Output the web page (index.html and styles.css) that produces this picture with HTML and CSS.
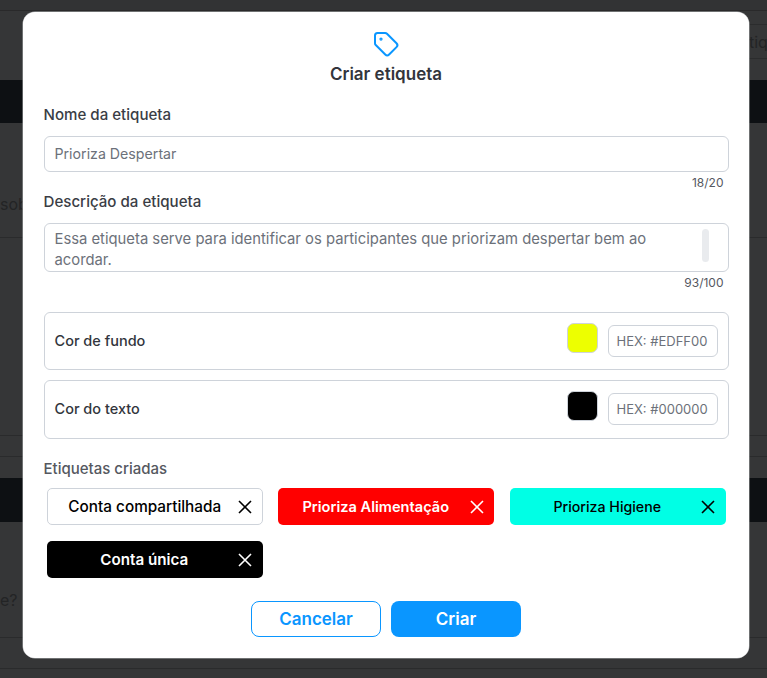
FILE: index.html
```html
<!DOCTYPE html>
<html lang="pt">
<head>
<meta charset="utf-8">
<title>Criar etiqueta</title>
<link rel="stylesheet" href="styles.css">
</head>
<body>
<div class="backdrop">
  <div class="bg-top"></div>
  <div class="bg-toolbar"><span class="bg-text-right">tiq</span></div>
  <div class="bg-band bg-band-one"></div>
  <div class="bg-row bg-row-a"><span class="bg-text-left">sob</span></div>
  <div class="bg-row bg-row-b"></div>
  <div class="bg-row bg-row-c"></div>
  <div class="bg-row bg-row-d"></div>
  <div class="bg-band bg-band-two"></div>
  <div class="bg-row bg-row-e"><span class="bg-text-left">e?</span></div>
  <div class="bg-row bg-row-f"></div>
  <div class="bg-row bg-row-g"></div>
</div>
<section class="modal">
  <header class="modal-head">
    <svg class="tag-icon" viewBox="0 0 24 24" fill="none" stroke="#0a96ff" stroke-width="1.6" stroke-linecap="round" stroke-linejoin="round"><path d="M3.2 5.2v6.1c0 .6.2 1.1.6 1.5l7.6 7.6c.9.9 2.2.9 3.1 0l5.9-5.9c.9-.9.9-2.2 0-3.1l-7.6-7.6c-.4-.4-.9-.6-1.5-.6H5.2c-1.1 0-2 .9-2 2z"/><circle cx="8" cy="8" r=".5"/></svg>
    <h1 class="modal-title">Criar etiqueta</h1>
  </header>

  <label class="field-label">Nome da etiqueta</label>
  <div class="text-box name-box">Prioriza Despertar</div>
  <div class="counter">18/20</div>

  <label class="field-label desc-label">Descrição da etiqueta</label>
  <div class="text-box desc-box">
    <span class="desc-text">Essa etiqueta serve para identificar os participantes que priorizam despertar bem ao acordar.</span>
    <span class="scrollbar"></span>
  </div>
  <div class="counter">93/100</div>

  <div class="color-row color-row-first">
    <span class="color-label">Cor de fundo</span>
    <span class="swatch swatch-yellow"></span>
    <span class="hex-box">HEX: #EDFF00</span>
  </div>
  <div class="color-row">
    <span class="color-label">Cor do texto</span>
    <span class="swatch swatch-black"></span>
    <span class="hex-box">HEX: #000000</span>
  </div>

  <div class="created-label">Etiquetas criadas</div>
  <div class="tag-grid">
    <div class="tag tag-white"><span class="tag-name">Conta compartilhada</span><svg class="close" viewBox="0 0 14 14"><path d="M1 1l12 12M13 1L1 13"/></svg></div>
    <div class="tag tag-red"><span class="tag-name">Prioriza Alimentação</span><svg class="close" viewBox="0 0 14 14"><path d="M1 1l12 12M13 1L1 13"/></svg></div>
    <div class="tag tag-cyan"><span class="tag-name">Prioriza Higiene</span><svg class="close" viewBox="0 0 14 14"><path d="M1 1l12 12M13 1L1 13"/></svg></div>
    <div class="tag tag-black"><span class="tag-name">Conta única</span><svg class="close" viewBox="0 0 14 14"><path d="M1 1l12 12M13 1L1 13"/></svg></div>
  </div>

  <div class="actions">
    <button class="btn btn-outline">Cancelar</button>
    <button class="btn btn-solid">Criar</button>
  </div>
</section>
</body>
</html>
```

FILE: styles.css
```css
* { box-sizing: border-box; }
html, body { margin: 0; height: 678px; overflow: hidden; }
body { background: #353637; font-family: Inter, "Liberation Sans", sans-serif; position: relative; }

.backdrop { display: flex; flex-direction: column; height: 678px; font-size: 16px; }
.bg-top { height: 11px; background: #323334; border-bottom: 1px solid #29292a; }
.bg-toolbar { height: 69px; padding-top: 13px; display: flex; justify-content: flex-end; align-items: flex-start; }
.bg-text-right { width: 18px; height: 35px; line-height: 35px; color: #232425; border-top: 1px solid #2b2c2d; border-bottom: 1px solid #2b2c2d; white-space: nowrap; overflow: hidden; }
.bg-band { background: #0d1013; }
.bg-band-one { height: 43px; }
.bg-band-two { height: 44px; }
.bg-row { border-bottom: 1px solid #2a2b2c; display: flex; align-items: center; }
.bg-row-a { height: 115px; align-items: flex-end; padding-bottom: 23px; }
.bg-row-b { height: 198px; }
.bg-row-c { height: 21px; }
.bg-row-d { height: 21px; border-bottom: 0; }
.bg-row-e { height: 116px; align-items: flex-end; padding-bottom: 27px; }
.bg-row-f { height: 31px; }
.bg-row-g { flex: 1; border-bottom: 0; }
.bg-text-left { color: #232425; }

.modal { position: absolute; left: 23px; top: 12px; width: 726px; height: 646px; background: #fff; border-radius: 12px; padding: 17px 20.5px 0; color: #32353c; box-shadow: 0 0 0 .5px #a9abad; }
.modal-head { display: flex; flex-direction: column; align-items: center; }
.tag-icon { width: 30px; height: 30px; }
.modal-title { margin: 4px 0 0; font-size: 17px; line-height: 22px; font-weight: 600; color: #32353c; }

.field-label { display: block; margin-top: 20px; font-size: 15.1px; line-height: 20px; font-weight: 450; color: #3a3d45; }
.desc-label { margin-top: 0; }
.text-box { border: 1px solid #ced3da; border-radius: 6px; margin-top: 11px; color: #6c717a; }
.name-box { height: 36px; padding: 0 10px; line-height: 33px; font-size: 14.2px; }
.desc-box { height: 49px; padding: 5px 10px 0; line-height: 21px; font-size: 14.8px; display: flex; justify-content: space-between; align-items: flex-start; overflow: hidden; }
.desc-text { width: 630px; }
.scrollbar { width: 7px; height: 33px; border-radius: 4px; background: #e9ebee; margin: 0 9px 0 0; }
.counter { text-align: right; padding-right: 5px; font-size: 12px; line-height: 16px; height: 17px; margin-top: 3px; color: #55585f; }

.color-row { height: 58.5px; border: 1px solid #ced3da; border-radius: 6px; display: flex; align-items: center; padding: 0 10px; margin-top: 10px; font-size: 14.5px; font-weight: 450; }
.color-row-first { height: 58px; margin-top: 20px; }
.color-label { flex: 1; margin-bottom: 1px; }
.swatch { width: 31px; height: 30px; border-radius: 7px; border: 1px solid #ced3da; margin-bottom: 6px; }
.swatch-yellow { background: #edff00; }
.swatch-black { background: #000; }
.hex-box { width: 110px; height: 32px; border: 1px solid #ced3da; border-radius: 6px; margin-left: 10px; padding-left: 8px; font-size: 13px; font-weight: 400; line-height: 30px; color: #6c717a; }

.created-label { margin-top: 21.5px; font-size: 15px; line-height: 18px; color: #55585f; font-weight: 450; }
.tag-grid { display: grid; grid-template-columns: repeat(3, 216px); gap: 16px 15.5px; margin: 10px 0 0 3px; }
.tag { height: 37px; border-radius: 5px; display: flex; align-items: center; padding: 0 10.5px 0 4px; font-weight: 450; }
.tag-name { flex: 1; text-align: center; }
.close { width: 14px; height: 14px; fill: none; stroke: currentColor; stroke-width: 1.6; }
.tag-white { background: #fff; color: #000; border: 1px solid #ced3da; padding-right: 9.5px; font-size: 15.3px; }
.tag-red { background: #ff0000; color: #fff; font-weight: 600; font-size: 14.6px; }
.tag-cyan { background: #00ffe5; color: #000; font-size: 14.2px; }
.tag-black { background: #000; color: #fff; font-weight: 600; font-size: 15.2px; }

.actions { display: flex; justify-content: center; gap: 10px; margin-top: 23px; }
.btn { width: 130px; height: 36px; border-radius: 8px; font-family: inherit; font-size: 17px; font-weight: 600; padding: 0; }
.btn-outline { background: #fff; border: 1px solid #0a96ff; color: #0a96ff; }
.btn-solid { background: #0a96ff; border: 0; color: #fff; }
```
